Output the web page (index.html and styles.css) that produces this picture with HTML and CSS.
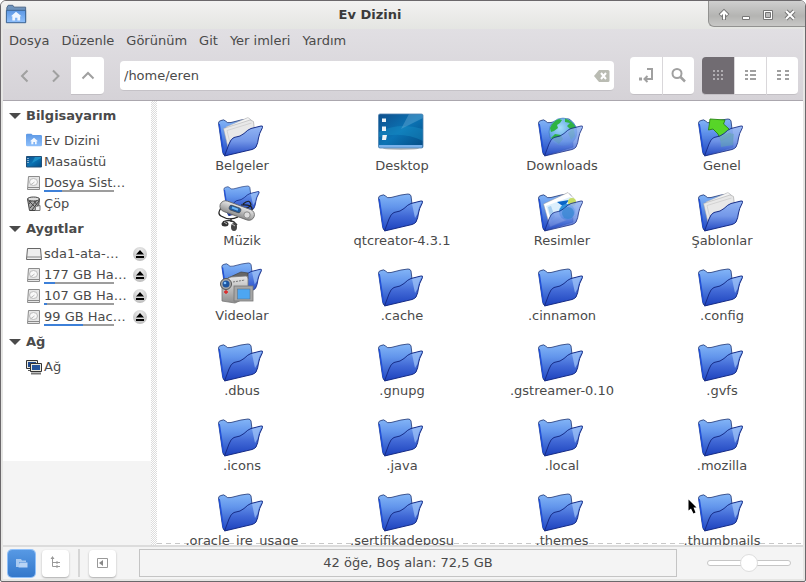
FILE: index.html
```html
<!DOCTYPE html>
<html lang="tr">
<head>
<meta charset="utf-8">
<title>Ev Dizini</title>
<link rel="stylesheet" href="styles.css">
</head>
<body>
<svg class="defs" aria-hidden="true">
  <defs>
    <linearGradient id="gBack" x1="0" y1="0" x2="0" y2="1"><stop offset="0" stop-color="#83b5f7"/><stop offset=".35" stop-color="#6396ec"/><stop offset="1" stop-color="#2348c0"/></linearGradient>
    <linearGradient id="gFront" x1="0" y1="0" x2="0" y2="1"><stop offset="0" stop-color="#6f9ff0"/><stop offset=".5" stop-color="#4169d6"/><stop offset="1" stop-color="#1c41bd"/></linearGradient>
    <linearGradient id="gLight" x1="0" y1="0" x2="0" y2="1"><stop offset="0" stop-color="#93b6f4"/><stop offset=".5" stop-color="#7397e8"/><stop offset="1" stop-color="#2449c2"/></linearGradient>
    <linearGradient id="gDesk" x1="0" y1="0" x2="1" y2="1"><stop offset="0" stop-color="#0f4f8c"/><stop offset=".5" stop-color="#0b73b4"/><stop offset="1" stop-color="#044b84"/></linearGradient>
    <linearGradient id="gMetal" x1="0" y1="0" x2="0" y2="1"><stop offset="0" stop-color="#e8e8e8"/><stop offset="1" stop-color="#8e8e8e"/></linearGradient>
    <linearGradient id="gHome" x1="0" y1="0" x2="0" y2="1"><stop offset="0" stop-color="#5b97e4"/><stop offset="1" stop-color="#8fc0fb"/></linearGradient>
    <radialGradient id="gGlobe" cx=".4" cy=".35" r=".7"><stop offset="0" stop-color="#a5dcfb"/><stop offset="1" stop-color="#3a8ad6"/></radialGradient>
    <radialGradient id="gEject" cx=".5" cy=".3" r=".7"><stop offset="0" stop-color="#f0f0f0"/><stop offset="1" stop-color="#bdbdbd"/></radialGradient>
  </defs>
  <symbol id="back" viewBox="0 0 48 48">
    <path d="M1.500 14Q1.500 12 4 11.500Q7 10 8.500 12Q10 14.500 14 13.500L24 11L31 10Q33.500 10 34 12L35 20L36 38L8 46.500Q6 46.500 5.500 42Z" fill="url(#gBack)" stroke="#1d3474" stroke-width=".8"/>
    <path d="M2.200 15L6.500 44" stroke="#2150d8" stroke-width="1.500" fill="none"/>
  </symbol>
  <symbol id="front" viewBox="0 0 48 48">
    <path d="M7.500 47L12 35Q14 29.500 17 28.500Q24 27.500 27 24.500Q31 20.500 34 19.500L44 17Q46 16.500 45.500 18.500Q42 25 41.500 29Q41 34 39 38Q38 39.500 35 40.500Z" fill="url(#gFront)" stroke="#152b86" stroke-width="1"/>
    <path d="M35 20L44.500 17.500Q41 25 40.500 30L38 34Z" fill="#a7cbfb" opacity=".65"/>
  </symbol>
  <symbol id="frontl" viewBox="0 0 48 48">
    <path d="M7.500 47L12 35Q14 29.500 17 28.500Q24 27.500 27 24.500Q31 20.500 34 19.500L44 17Q46 16.500 45.500 18.500Q42 25 41.500 29Q41 34 39 38Q38 39.500 35 40.500Z" fill="url(#gLight)" stroke="#152b86" stroke-width="1"/>
  </symbol>
  <symbol id="folder" viewBox="0 0 48 48"><use href="#back"/><use href="#front"/></symbol>
  <symbol id="papers" viewBox="0 0 48 48">
    <use href="#back"/>
    <path d="M9 18L31 8.500L36.500 13L38 30L14 42Z" fill="#f4f4f4" stroke="#aaa" stroke-width=".5"/>
    <path d="M6.500 19.500L33 11L36.500 12.500L38 30L12 43Z" fill="#e8e8e8" stroke="#a2a2a2" stroke-width=".5"/>
    <path d="M34.500 14L10 21.500L13 34" fill="none" stroke="#bcbcbc" stroke-width=".5"/>
    <use href="#frontl"/>
  </symbol>
  <symbol id="downloads" viewBox="0 0 48 48">
    <use href="#back"/>
    <circle cx="26" cy="23" r="14" fill="url(#gGlobe)" stroke="#356eac" stroke-width=".5"/>
    <path d="M13 19Q16 12 22 10L25 11L23 14L20 16L21 19L17 22L14 23ZM28 9.500Q36 12 39 19L37 20L38 27L34 31L31 24L34 21L30 17L33 14L28 13ZM18 25L24 26L26 30L22 35Q17 32 14 29Z" fill="#2fb344"/>
    <use href="#frontl" opacity=".84"/>
  </symbol>
  <symbol id="public" viewBox="0 0 48 48">
    <use href="#back"/>
    <path d="M13 10L28 11L26.500 15L32 20L34 27L24 32L21 25L16 20L11.500 21Z" fill="#58d628" stroke="#278612" stroke-width=".9"/>
    <use href="#frontl" opacity=".9"/>
    <path d="M23 28L32 24L37 25L36 36L24 38Z" fill="#64a7ae" opacity=".5"/>
  </symbol>
  <symbol id="pictures" viewBox="0 0 48 48">
    <use href="#back"/>
    <path d="M6.500 20L31 8.500L36.500 14L39 32L13 43Z" fill="#fff" stroke="#999" stroke-width=".5"/>
    <path d="M9 22L33 13L37 15L39 30L15 39Z" fill="#dceffc"/>
    <path d="M11 23L14 22L18 33L14 36Z" fill="#a7cff0"/>
    <path d="M20 18L32 16L27 23Z" fill="#0b66c8"/>
    <circle cx="35" cy="18" r="4" fill="#c5dc66"/>
    <circle cx="30" cy="28" r="8" fill="#2f93dc"/>
    <use href="#frontl" opacity=".84"/>
    <circle cx="31" cy="29" r="6" fill="#3485d0" opacity=".7"/>
  </symbol>
  <symbol id="music" viewBox="0 0 48 48">
    <use href="#folder" transform="translate(5.700 -6) scale(.8)"/>
    <path d="M6 22Q-1 29 4 32Q12 37 21 33M26 20Q33 14 34 21Q30 26 25 24M24 21Q36 20 35 26" fill="none" stroke="#222" stroke-width="1.200"/>
    <rect x="2" y="21" width="36" height="11" rx="5.500" transform="rotate(20 20 27)" fill="url(#gMetal)" stroke="#666" stroke-width=".8"/>
    <rect x="12" y="22.500" width="12" height="5" rx="2" transform="rotate(20 18 25)" fill="#245b9c" stroke="#444" stroke-width=".6"/>
    <path d="M15 23.500L21 25.700" stroke="#6cb5f5" stroke-width="2"/>
    <circle cx="30" cy="31" r="3.200" fill="#ddd" stroke="#888"/>
    <path d="M14 34V38M6 38Q12 35 17 38L20 41" fill="none" stroke="#333" stroke-width="1.500"/>
    <ellipse cx="8" cy="40" rx="3.500" ry="2.500" fill="#333"/><ellipse cx="17" cy="43" rx="3" ry="4" fill="#444"/><path d="M15 40L18 42M7 38L10 40" stroke="#bbb"/>
  </symbol>
  <symbol id="videos" viewBox="0 0 48 48">
    <use href="#folder" transform="translate(3.500 -5) scale(.9)"/>
    <path d="M11 19L24 13L31 14V20L14 23Z" fill="#666" stroke="#444" stroke-width=".7"/>
    <path d="M5 22L14 18L29 17Q31 17 31 20V38L18 44L5 42Z" fill="url(#gMetal)" stroke="#777" stroke-width=".8"/>
    <circle cx="9" cy="25" r="5.500" fill="#a8a8a8" stroke="#555"/><circle cx="9" cy="25" r="3.500" fill="#1d55a0"/><circle cx="8" cy="24" r="1.300" fill="#7fc1ff"/>
    <path d="M16 23L28 21" stroke="#777" stroke-dasharray="2 1"/>
    <path d="M7 33H11M9 31V35" stroke="#d22" stroke-width="1.300"/>
    <rect x="17" y="27" width="19" height="15" fill="#a6a6a6" stroke="#777" stroke-width=".8"/>
    <rect x="20.500" y="30" width="12.500" height="10" fill="#4da6f2" stroke="#596c7d" stroke-width=".5"/>
  </symbol>
  <symbol id="desktop" viewBox="0 0 48 48">
    <ellipse cx="24" cy="39.500" rx="18" ry="1.500" fill="#999" opacity=".6"/>
    <rect x="1.500" y="5" width="44.500" height="34" rx="1.500" fill="url(#gDesk)"/>
    <path d="M2 23Q22 13 46 20V32Q26 22 2 28Z" fill="#1d9cce" opacity=".35"/>
    <path d="M24 20L46 9V5H32Z" fill="#7eb8dd" opacity=".35"/>
    <path d="M2 36H45.500V38Q45.500 39 44 39H3Q2 39 2 38Z" fill="#78b1eb"/>
    <path d="M5 9.500H9V13H5ZM5 17.500H9V22H5ZM5.500 26H10L9 31H5Z" fill="#eef3f6"/>
    <rect x="1.500" y="5" width="44.500" height="34" rx="1.500" fill="none" stroke="#4e82af" stroke-width=".8"/>
  </symbol>
  <symbol id="homef" viewBox="0 0 24 24">
    <path d="M0 3Q0 1 2 1H8L10 3H22Q24 3 24 5V18Q24 20 22 20H2Q0 20 0 18Z" fill="url(#gHome)"/>
    <path d="M12 7L6 12.500H8V17H11V13.500H13.500V17H16V12.500H18Z" fill="#f4f9ff"/>
  </symbol>
  <symbol id="disk" viewBox="0 0 16 16">
    <path d="M2.500 1.500H13.500V14.500H1.500Z" fill="#e6e6e6" stroke="#8c8c8c"/>
    <path d="M2 12.500H13" stroke="#8a8a8a"/>
    <ellipse cx="7.500" cy="7" rx="4" ry="3.500" fill="#f8f8f8" stroke="#bbb"/>
    <path d="M4.500 10L8.500 7" stroke="#bbb"/>
  </symbol>
  <symbol id="eject" viewBox="0 0 14 14">
    <circle cx="7" cy="7" r="7" fill="url(#gEject)"/><path d="M7 3L11 7.500H3ZM3 9H11V11H3Z" fill="#000"/>
  </symbol>
</svg>

<div class="window">
  <header class="titlebar">
    <svg class="app-icon" viewBox="0 0 24 24"><path d="M2 5L3.500 2.500H8.500L10 4.500H22.500V21H2Z" fill="#6f94bd" stroke="#456184"/><path d="M1.500 8H22.500V21.500H1.500Z" fill="url(#gHome)" stroke="#3a628f"/><path d="M12 9.500L6.500 14.500H8V19H11V16H13.500V19H16.500V14.500H18Z" fill="#eef6ff"/></svg>
    <h1 class="title">Ev Dizini</h1>
    <div class="controls">
      <button aria-label="Topla"><svg viewBox="0 0 14 14"><path d="M7 12V4M3 7.500L7 3.500L11 7.500" class="edge"/><path d="M7 11.500V4M3.500 7L7 3.500L10.500 7" class="face"/></svg></button>
      <button aria-label="Küçült"><svg viewBox="0 0 14 14"><path d="M3.500 8.500H10.500V11.500H3.500Z" fill="#fff" stroke="#777"/></svg></button>
      <button aria-label="Büyüt"><svg viewBox="0 0 14 14"><path d="M2.500 2.500H11.500V11.500H2.500Z" fill="#fff" stroke="#777"/><path d="M4.500 4.500H9.500V9.500H4.500Z" fill="#bbb" stroke="#777"/></svg></button>
      <button aria-label="Kapat"><svg viewBox="0 0 14 14"><path d="M3 3L11 11M11 3L3 11" class="edge"/><path d="M3 3L11 11M11 3L3 11" class="face"/></svg></button>
    </div>
  </header>

  <div class="content">
    <nav class="menubar">
      <button>Dosya</button><button>Düzenle</button><button>Görünüm</button><button>Git</button><button>Yer imleri</button><button>Yardım</button>
    </nav>
    <div class="toolbar">
      <div class="nav-group">
        <button class="flat" aria-label="Geri"><svg viewBox="0 0 16 16"><path d="M10.500 2.500L5 8L10.500 13.500"/></svg></button>
        <button class="flat" aria-label="İleri"><svg viewBox="0 0 16 16"><path d="M5 2.500L10.500 8L5 13.500"/></svg></button>
        <button class="tool up" aria-label="Yukarı"><svg viewBox="0 0 16 16"><path d="M2.500 11.500L8 6L13.500 11.500"/></svg></button>
      </div>
      <div class="location">
        <input type="text" value="/home/eren" aria-label="Konum">
        <button class="clear" aria-label="Temizle"><svg viewBox="0 0 16 12"><path d="M0 6L5 0H14Q15.500 0 15.500 1.500V10.500Q15.500 12 14 12H5Z" fill="#babcb3"/><path d="M7 3L12 9M12 3L7 9" stroke="#fff" stroke-width="2"/></svg></button>
      </div>
      <div class="group">
        <button class="tool" aria-label="Konum girişi"><svg viewBox="0 0 16 16"><path d="M9 2H14V12H7M9.500 9L6.500 12L9.500 15"/><path d="M1 10.500H4V13.500H1Z" class="fill"/></svg></button>
        <button class="tool" aria-label="Ara"><svg viewBox="0 0 16 16"><circle cx="6" cy="6.500" r="4.500"/><path d="M9.500 10L14 14.500" stroke-width="2.500"/></svg></button>
      </div>
      <div class="group">
        <button class="tool active" aria-label="Simge görünümü"><svg viewBox="0 0 16 16"><path d="M3 4H13M3 8H13M3 12H13" stroke-dasharray="2 2"/></svg></button>
        <button class="tool" aria-label="Liste görünümü"><svg viewBox="0 0 16 16"><path d="M2 4H5M2 8H5M2 12H5M7 4H13M7 8H13M7 12H13"/></svg></button>
        <button class="tool" aria-label="Sıkışık görünüm"><svg viewBox="0 0 16 16"><path d="M2 4H6M2 8H6M2 12H6M10 4H14M10 8H14M10 12H14"/></svg></button>
      </div>
    </div>

    <div class="main">
      <aside class="sidebar">
        <div class="places">
          <h2>Bilgisayarım</h2>
          <ul>
            <li><a href="#ev"><svg viewBox="0 0 24 24"><use href="#homef"/></svg><span>Ev Dizini</span></a></li>
            <li><a href="#masaustu"><svg viewBox="0 0 16 16"><path d="M.5 2.500H15.500V13H.5Z" fill="url(#gDesk)" stroke="#234f77"/><path d="M6 9L15 4V3H9Z" fill="#2ba5d5" opacity=".6"/><path d="M2 4V9" stroke="#fff" stroke-dasharray="1 1"/></svg><span>Masaüstü</span></a></li>
            <li><a href="#sistem"><svg viewBox="0 0 16 16"><use href="#disk"/></svg><span>Dosya Sist…</span><i class="usage"><b style="width:26%"></b></i></a></li>
            <li><a href="#cop"><svg viewBox="0 0 16 16"><path d="M1.500 3L13.500 3L12 14.500H3.500Z" fill="#aaa" stroke="#444"/><path d="M3 5L11 13M7 4L12 10M11 4L4 12M6 4L3 8M13 5L6 14" stroke="#444"/><ellipse cx="7.500" cy="3" rx="6" ry="2" fill="#ddd" stroke="#444"/><path d="M9.500 14.500V10.500L14 9.500V14.500Z" fill="#eee" stroke="#777"/></svg><span>Çöp</span></a></li>
          </ul>
          <h2>Aygıtlar</h2>
          <ul>
            <li><a href="#sda1"><svg viewBox="0 0 16 16"><path d="M1.500 2.500H14.500L15.500 13.500H.5Z" fill="#eee" stroke="#666"/><path d="M1 11H15" stroke="#888"/></svg><span>sda1-ata-…</span></a><button class="eject" aria-label="sda1 çıkar"><svg viewBox="0 0 14 14"><use href="#eject"/></svg></button></li>
            <li><a href="#d177"><svg viewBox="0 0 16 16"><use href="#disk"/></svg><span>177 GB Ha…</span><i class="usage"><b style="width:16%"></b></i></a><button class="eject" aria-label="177 GB çıkar"><svg viewBox="0 0 14 14"><use href="#eject"/></svg></button></li>
            <li><a href="#d107"><svg viewBox="0 0 16 16"><use href="#disk"/></svg><span>107 GB Ha…</span><i class="usage"><b style="width:4%"></b></i></a><button class="eject" aria-label="107 GB çıkar"><svg viewBox="0 0 14 14"><use href="#eject"/></svg></button></li>
            <li><a href="#d99"><svg viewBox="0 0 16 16"><use href="#disk"/></svg><span>99 GB Hac…</span><i class="usage"><b style="width:56%"></b></i></a><button class="eject" aria-label="99 GB çıkar"><svg viewBox="0 0 14 14"><use href="#eject"/></svg></button></li>
          </ul>
          <h2>Ağ</h2>
          <ul>
            <li><a href="#ag"><svg viewBox="0 0 16 16"><path d="M.5 1.500H11.500V9.500H.5Z" fill="#e8e8e0" stroke="#333"/><path d="M2 3H10V8H2Z" fill="#1e4a90"/><path d="M2 11.500H6" stroke="#555"/><path d="M4.500 4.500H15.500V12.500H4.500Z" fill="#e8e8e0" stroke="#333"/><path d="M6 6H14V11H6Z" fill="#24549c"/><path d="M5 14.500H15" stroke="#777" stroke-width="2"/></svg><span>Ağ</span></a></li>
          </ul>
        </div>
      </aside>
      <div class="handle"></div>
      <section class="files" aria-label="Dosyalar">
        <button class="file"><svg viewBox="0 0 48 48"><use href="#papers"/></svg><span>Belgeler</span></button>
        <button class="file"><svg viewBox="0 0 48 48"><use href="#desktop"/></svg><span>Desktop</span></button>
        <button class="file"><svg viewBox="0 0 48 48"><use href="#downloads"/></svg><span>Downloads</span></button>
        <button class="file"><svg viewBox="0 0 48 48"><use href="#public"/></svg><span>Genel</span></button>
        <button class="file"><svg viewBox="0 0 48 48"><use href="#music"/></svg><span>Müzik</span></button>
        <button class="file"><svg viewBox="0 0 48 48"><use href="#folder"/></svg><span>qtcreator-4.3.1</span></button>
        <button class="file"><svg viewBox="0 0 48 48"><use href="#pictures"/></svg><span>Resimler</span></button>
        <button class="file"><svg viewBox="0 0 48 48"><use href="#papers"/></svg><span>Şablonlar</span></button>
        <button class="file"><svg viewBox="0 0 48 48"><use href="#videos"/></svg><span>Videolar</span></button>
        <button class="file"><svg viewBox="0 0 48 48"><use href="#folder"/></svg><span>.cache</span></button>
        <button class="file"><svg viewBox="0 0 48 48"><use href="#folder"/></svg><span>.cinnamon</span></button>
        <button class="file"><svg viewBox="0 0 48 48"><use href="#folder"/></svg><span>.config</span></button>
        <button class="file"><svg viewBox="0 0 48 48"><use href="#folder"/></svg><span>.dbus</span></button>
        <button class="file"><svg viewBox="0 0 48 48"><use href="#folder"/></svg><span>.gnupg</span></button>
        <button class="file"><svg viewBox="0 0 48 48"><use href="#folder"/></svg><span>.gstreamer-0.10</span></button>
        <button class="file"><svg viewBox="0 0 48 48"><use href="#folder"/></svg><span>.gvfs</span></button>
        <button class="file"><svg viewBox="0 0 48 48"><use href="#folder"/></svg><span>.icons</span></button>
        <button class="file"><svg viewBox="0 0 48 48"><use href="#folder"/></svg><span>.java</span></button>
        <button class="file"><svg viewBox="0 0 48 48"><use href="#folder"/></svg><span>.local</span></button>
        <button class="file"><svg viewBox="0 0 48 48"><use href="#folder"/></svg><span>.mozilla</span></button>
        <button class="file"><svg viewBox="0 0 48 48"><use href="#folder"/></svg><span>.oracle_jre_usage</span></button>
        <button class="file"><svg viewBox="0 0 48 48"><use href="#folder"/></svg><span>.sertifikadeposu</span></button>
        <button class="file"><svg viewBox="0 0 48 48"><use href="#folder"/></svg><span>.themes</span></button>
        <button class="file"><svg viewBox="0 0 48 48"><use href="#folder"/></svg><span>.thumbnails</span></button>
      </section>
    </div>

    <footer class="statusbar">
      <button class="mini on" aria-label="Yerler"><svg viewBox="0 0 14 14"><path d="M1 3H6L7 4.500H11V6H4V11H1Z" fill="#a8c9f0"/><path d="M4.500 6.500H12.500V11.500H3.500Z" fill="#b8d4f5"/></svg></button>
      <button class="mini" aria-label="Ağaç"><svg viewBox="0 0 14 14"><path d="M3.500 1V10.500H7M3.500 6.500H7M9 6.500H11M9 10.500H11" fill="none" stroke="#999"/><path d="M3.500 0L5.500 3H1.500ZM7 5.500H9V7.500H7ZM7 9.500H9V11.500H7Z" fill="#999"/></svg></button>
      <span class="sep"></span>
      <button class="mini" aria-label="Kenar çubuğu"><svg viewBox="0 0 14 14"><path d="M1.500 2.500H11.500V11.500H1.500Z" fill="none" stroke="#999"/><path d="M7 4V10L3 7Z" fill="#888"/></svg></button>
      <output class="info">42 öğe, Boş alan: 72,5 GB</output>
      <input class="zoom" type="range" min="0" max="100" value="50" aria-label="Yakınlaştırma">
    </footer>
  </div>
</div>
<svg class="pointer" viewBox="0 0 9 16" aria-hidden="true"><path d="M.5.5V11.500L3 9.500L5.500 14.500L7.500 13.500L5.500 8.500H8.500Z" fill="#000"/></svg>
</body>
</html>
```
FILE: styles.css
```css
* { box-sizing: border-box; }
body {
  margin: 0;
  height: 100vh;
  overflow: hidden;
  background: #fff;
  color: #4a4a4a;
  font: 13px/18px "DejaVu Sans", sans-serif;
}
button {
  padding: 0;
  border: 0;
  background: none;
  color: inherit;
  font: inherit;
}
svg { display: block; flex: none; }
.defs { position: absolute; width: 0; height: 0; }

.window {
  display: flex;
  flex-direction: column;
  height: 100vh;
  border: 1px solid #6b686b;
  border-radius: 6px 6px 2px 2px;
  background: #e6e6e4;
  overflow: hidden;
}
.titlebar {
  display: flex;
  align-items: flex-start;
  height: 28px;
  padding-left: 4px;
  background: linear-gradient(#f2f2f1, #e4e5e2);
}
.app-icon { width: 22px; height: 22px; margin-top: 2px; }
.title {
  flex: 1;
  margin: 0;
  padding: 5px 0 0 5px;
  color: #3a3a3a;
  font-size: 13px;
  line-height: 18px;
  text-align: center;
}
.controls {
  display: flex;
  align-items: center;
  gap: 8px;
  height: 26px;
  padding: 2px 8px 0;
  border-left: 1px solid #929290;
  border-bottom: 1px solid #929290;
  border-radius: 0 0 0 6px;
  background: linear-gradient(#cfcfcf, #b4b4b2 60%, #c8c8c6);
}
.controls svg { width: 14px; height: 14px; }
.edge { fill: none; stroke: #777; stroke-width: 4; }
.face { fill: none; stroke: #fff; stroke-width: 2; }

.content {
  flex: 1;
  min-height: 0;
  display: flex;
  flex-direction: column;
  margin: 0 2px 2px;
  background: linear-gradient(#e1dfe3, #d5d2d7 72px);
}
.menubar { display: flex; gap: 12px; height: 24px; padding: 0 6px; }
.toolbar {
  display: flex;
  align-items: center;
  gap: 8px;
  height: 48px;
  padding: 0 5px 2px 6px;
  border-bottom: 1px solid #aba7ae;
}
.toolbar svg { width: 16px; height: 16px; fill: none; stroke: #a0a0a0; stroke-width: 2; }
.toolbar .fill { fill: #a0a0a0; stroke: none; }
.nav-group { display: flex; margin-right: 8px; }
.flat, .tool { display: flex; align-items: center; justify-content: center; height: 38px; }
.flat { width: 31px; }
.tool { width: 32px; background: #fff; border-bottom: 1px solid #c2bfc4; }
.up { width: 33px; border-radius: 0 4px 4px 0; }
.location {
  flex: 1;
  display: flex;
  align-items: center;
  height: 30px;
  margin-right: 8px;
  padding: 1px 4px 0;
  border-bottom: 1px solid #c5c2c7;
  border-radius: 4px;
  background: #fff;
}
.location input {
  flex: 1;
  min-width: 0;
  padding: 0;
  border: 0;
  outline: 0;
  background: none;
  color: inherit;
  font: inherit;
}
.toolbar .clear svg { height: 12px; stroke: none; }
.group { display: flex; }
.group .tool + .tool { border-left: 1px solid #d9d7da; }
.group .tool:first-child { border-radius: 4px 0 0 4px; }
.group .tool:last-child { border-radius: 0 4px 4px 0; }
.group .tool.active { background: #716c72; }
.group .tool.active svg { stroke: #b0adb1; }

.main { flex: 1; min-height: 0; display: flex; background: #fff; }
.sidebar { width: 148px; overflow: hidden; background: #f4f4f4; }
.places { padding-bottom: 84px; background: #fff; }
.places h2 {
  display: flex;
  align-items: center;
  gap: 5px;
  height: 29px;
  margin: 0;
  padding-left: 6px;
  font-size: 13px;
}
.places h2::before {
  content: "";
  border: 6px solid transparent;
  border-top-color: #4a4a4a;
  border-bottom: 0;
}
.places ul { margin: 0; padding: 0; list-style: none; }
.places li { display: flex; align-items: center; height: 21px; padding: 0 4px 0 23px; }
.places a {
  flex: 1;
  display: grid;
  grid-template-columns: 16px 70px;
  align-items: center;
  column-gap: 2px;
  color: inherit;
  text-decoration: none;
  white-space: nowrap;
}
.places a svg { width: 16px; height: 16px; grid-row: 1 / span 2; }
.usage { height: 2px; margin-top: -2px; grid-column: 2; background: #9d9d9d; }
.usage b { display: block; height: 2px; background: #3d80d8; }
.eject svg { width: 14px; height: 14px; }
.handle {
  width: 6px;
  background: repeating-conic-gradient(#dcdcdc 0 25%, #fff 0 50%) 0 0 / 2px 2px;
}
.files {
  flex: 1;
  display: grid;
  grid-template-columns: repeat(auto-fill, minmax(160px, 1fr));
  grid-auto-rows: 75px;
  align-content: start;
  padding: 8px 2px 0 4px;
  overflow: hidden;
  background: repeating-linear-gradient(90deg, #c8c8c8 0 5px, transparent 5px 9px) 0 calc(100% - 1px) / 100% 1px no-repeat;
}
.file { display: flex; flex-direction: column; align-items: center; }
.file svg { width: 48px; height: 48px; }
.file span { padding-left: 2px; }

.statusbar {
  display: flex;
  align-items: center;
  height: 34px;
  padding: 0 12px 0 5px;
  border-top: 2px solid #dcdcdc;
  background: #f4f4f4;
}
.mini {
  display: flex;
  align-items: center;
  justify-content: center;
  width: 27px;
  height: 27px;
  margin-right: 7px;
  border-radius: 4px;
  background: #fff;
  box-shadow: 0 1px 2px #aaa;
}
.mini.on { background: linear-gradient(#5799e4, #3478cb); box-shadow: 0 0 0 1px #8fc0fa; }
.mini svg { width: 14px; height: 14px; }
.sep { width: 2px; height: 28px; margin: 0 9px 0 2px; background: #d6d6d6; }
.info {
  flex: 1;
  height: 28px;
  margin: 0 30px 0 16px;
  border: 1px solid #c4c4c4;
  line-height: 26px;
  text-align: center;
}
.zoom { width: 84px; height: 20px; margin: 0; appearance: none; background: none; }
.zoom::-webkit-slider-runnable-track {
  height: 6px;
  border: 1px solid #c6c6c6;
  border-radius: 3px;
  background: #fff;
}
.zoom::-webkit-slider-thumb {
  width: 18px;
  height: 18px;
  margin-top: -7px;
  appearance: none;
  border: 1px solid #dedede;
  border-radius: 50%;
  background: #fff;
}
.pointer { position: absolute; left: 688px; top: 499px; width: 9px; height: 16px; }
```
